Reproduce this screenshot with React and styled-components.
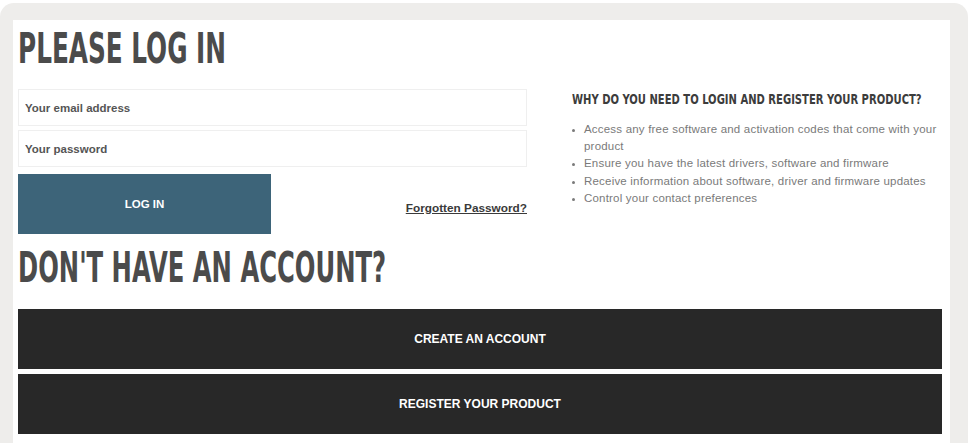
import styled, { createGlobalStyle } from 'styled-components';

const GlobalStyle = createGlobalStyle`
  html, body {
    margin: 0;
    padding: 0;
    background: #ffffff;
  }

  body {
    font-family: 'Liberation Sans', Arial, sans-serif;
  }

  * {
    box-sizing: border-box;
  }
`;

const reasons = [
  'Access any free software and activation codes that come with your product',
  'Ensure you have the latest drivers, software and firmware',
  'Receive information about software, driver and firmware updates',
  'Control your contact preferences',
];

export default function App() {
  return (
    <>
      <GlobalStyle />
      <Frame>
        <Panel>
          <TopSection>
            <LoginColumn>
              <Heading $scale={0.655}>PLEASE LOG IN</Heading>
              <Form onSubmit={(e) => e.preventDefault()}>
                <Field type="email" placeholder="Your email address" />
                <Field type="password" placeholder="Your password" />
                <ActionRow>
                  <LoginButton type="submit">LOG IN</LoginButton>
                  <ForgotLink href="#">Forgotten Password?</ForgotLink>
                </ActionRow>
              </Form>
            </LoginColumn>

            <InfoColumn>
              <InfoHeading>WHY DO YOU NEED TO LOGIN AND REGISTER YOUR PRODUCT?</InfoHeading>
              <ReasonList>
                {reasons.map((reason) => (
                  <li key={reason}>{reason}</li>
                ))}
              </ReasonList>
            </InfoColumn>
          </TopSection>

          <AccountHeading $scale={0.643}>DON'T HAVE AN ACCOUNT?</AccountHeading>

          <BarStack>
            <DarkBar type="button">CREATE AN ACCOUNT</DarkBar>
            <DarkBar type="button">REGISTER YOUR PRODUCT</DarkBar>
          </BarStack>
        </Panel>
      </Frame>
    </>
  );
}

const Frame = styled.div`
  width: 968px;
  height: 443px;
  margin-top: 3px;
  padding: 17px 18px 3px 13px;
  background-color: #eeedeb;
  border-radius: 14px 14px 0 0;
`;

const Panel = styled.div`
  height: 100%;
  background-color: #ffffff;
  padding: 8px 8px 5px 5px;
  display: flex;
  flex-direction: column;
`;

const TopSection = styled.div`
  display: grid;
  grid-template-columns: 509px minmax(0, 1fr);
  column-gap: 45px;
`;

const LoginColumn = styled.div`
  display: flex;
  flex-direction: column;
`;

const Heading = styled.h1`
  margin: 0;
  font-family: 'DejaVu Sans Condensed', 'DejaVu Sans', sans-serif;
  font-stretch: condensed;
  font-weight: 700;
  font-size: 42px;
  line-height: 1;
  color: #4b4b4b;
  white-space: nowrap;
  transform: scaleX(${(props) => props.$scale});
  transform-origin: left center;
`;

const AccountHeading = styled(Heading)`
  margin: 13px 0 20px;
`;

const Form = styled.form`
  display: flex;
  flex-direction: column;
  gap: 4px;
  margin-top: 19px;
`;

const Field = styled.input`
  height: 37px;
  width: 100%;
  border: 1px solid #efefef;
  padding: 0 6px;
  font-family: 'Liberation Sans', Arial, sans-serif;
  font-size: 11.5px;
  font-weight: 700;
  color: #444;
  outline: none;

  &::placeholder {
    color: #555555;
  }
`;

const ActionRow = styled.div`
  display: flex;
  align-items: center;
  justify-content: space-between;
  margin-top: 3px;
`;

const LoginButton = styled.button`
  width: 253px;
  height: 60px;
  border: none;
  background-color: #3d6479;
  color: #ffffff;
  font-family: 'Liberation Sans', Arial, sans-serif;
  font-size: 11.5px;
  font-weight: 700;
  cursor: pointer;
`;

const ForgotLink = styled.a`
  margin-top: 8px;
  font-size: 11.8px;
  font-weight: 700;
  color: #3a3a3a;
  text-decoration: underline;
`;

const InfoColumn = styled.div`
  min-width: 0;
  padding-top: 64px;
`;

const InfoHeading = styled.h2`
  margin: 0;
  font-family: 'DejaVu Sans Condensed', 'DejaVu Sans', sans-serif;
  font-stretch: condensed;
  font-weight: 700;
  font-size: 14px;
  line-height: 1;
  color: #3c3c3c;
  white-space: nowrap;
  transform: scaleX(0.795);
  transform-origin: left center;
`;

const ReasonList = styled.ul`
  margin: 15px 0 0;
  padding-left: 12px;
  font-size: 11.5px;
  letter-spacing: 0.2px;
  line-height: 17.2px;
  color: #7a7a7a;

  li::marker {
    font-size: 9px;
  }
`;

const BarStack = styled.div`
  display: flex;
  flex-direction: column;
  gap: 5px;
`;

const DarkBar = styled.button`
  height: 60px;
  width: 100%;
  border: none;
  background-color: #282828;
  color: #ffffff;
  font-family: 'Liberation Sans', Arial, sans-serif;
  font-size: 12px;
  font-weight: 700;
  cursor: pointer;
`;
